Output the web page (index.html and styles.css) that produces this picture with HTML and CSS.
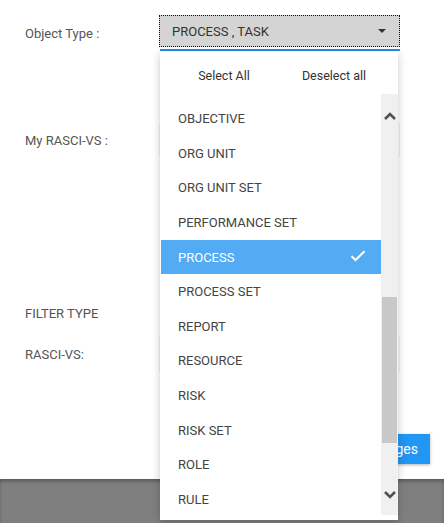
FILE: index.html
```html
<!DOCTYPE html>
<html>
<head>
<meta charset="utf-8">
<link rel="stylesheet" href="styles.css">
</head>
<body>
<div class="page">
  <div class="form">
    <div class="row row-type">
      <div class="label">Object Type :</div>
      <div class="select-wrap">
        <div class="select">
          <span class="select-text">PROCESS , TASK</span>
          <span class="caret"></span>
        </div>
        <div class="underline"></div>
      </div>
    </div>
    <div class="row row-my">
      <div class="label">My RASCI-VS :</div>
      <div class="field"></div>
    </div>
    <div class="row row-filter">
      <div class="label">FILTER TYPE</div>
    </div>
    <div class="row row-rasci">
      <div class="label">RASCI-VS:</div>
      <div class="field"></div>
    </div>
    <div class="actions">
      <button class="btn">Save Changes</button>
    </div>
  </div>

  <div class="panel">
    <div class="panel-head">
      <span class="head-btn">Select All</span>
      <span class="head-btn">Deselect all</span>
    </div>
    <div class="panel-body">
      <ul class="list">
        <li class="item">OBJECTIVE</li>
        <li class="item">ORG UNIT</li>
        <li class="item">ORG UNIT SET</li>
        <li class="item">PERFORMANCE SET</li>
        <li class="item selected">PROCESS
          <svg class="check" width="16" height="12" viewBox="0 0 16 12"><path d="M1.5 6.2 L5.6 10 L14.5 1.2" fill="none" stroke="#fff" stroke-width="2"/></svg>
        </li>
        <li class="item">PROCESS SET</li>
        <li class="item">REPORT</li>
        <li class="item">RESOURCE</li>
        <li class="item">RISK</li>
        <li class="item">RISK SET</li>
        <li class="item">ROLE</li>
        <li class="item">RULE</li>
      </ul>
      <div class="sb">
        <div class="sb-btn">
          <svg width="12" height="8" viewBox="0 0 12 8"><path d="M1 7 L6 2 L11 7" fill="none" stroke="#505050" stroke-width="2.6"/></svg>
        </div>
        <div class="sb-thumb"></div>
        <div class="sb-space"></div>
        <div class="sb-btn">
          <svg width="12" height="8" viewBox="0 0 12 8"><path d="M1 1 L6 6 L11 1" fill="none" stroke="#505050" stroke-width="2.6"/></svg>
        </div>
      </div>
    </div>
  </div>
</div>
<div class="footer"></div>
</body>
</html>
```

FILE: styles.css
```css
* { box-sizing: border-box; }
html, body { margin: 0; padding: 0; }
body {
  width: 444px;
  height: 523px;
  overflow: hidden;
  font-family: Roboto, "Liberation Sans", sans-serif;
  background: #7f7f7f;
}
.page {
  position: relative;
  height: 479px;
  background: #fff;
}
.form {
  padding: 15px 0 0 25px;
}
.row {
  display: flex;
  align-items: center;
}
.label {
  width: 134px;
  font-size: 13px;
  color: #555;
}
.row-type { align-items: flex-start; }
.row-type .label { line-height: 32px; padding-top: 3px; }
.select-wrap {
  width: 241px;
}
.select {
  height: 32px;
  background: #d4d4d4;
  border: 1px dotted #111;
  display: flex;
  align-items: center;
  justify-content: space-between;
  padding: 0 13px 0 12px;
}
.select-text {
  font-size: 13px;
  color: #333;
}
.caret {
  width: 0;
  height: 0;
  border-left: 4px solid transparent;
  border-right: 4px solid transparent;
  border-top: 4px solid #333;
}
.underline {
  margin: 2px 0 0 1px;
  height: 2px;
  background: #2a8be0;
}
.field {
  width: 241px;
  height: 34px;
  border: 1px solid #f0f0f0;
}
.row-my { margin-top: 72px; height: 34px; }
.row-filter { margin-top: 146px; height: 20px; }
.row-rasci { margin-top: 14px; height: 35px; }
.row-rasci .field { height: 35px; }
.actions {
  margin-top: 62px;
  display: flex;
  justify-content: flex-end;
  padding-right: 14px;
}
.btn {
  height: 30px;
  border: none;
  background: #2196f3;
  color: #fff;
  font-family: Roboto, "Liberation Sans", sans-serif;
  font-size: 14px;
  padding: 0 12px;
  box-shadow: 0 1px 3px rgba(0,0,0,.3);
}
.footer {
  height: 44px;
  background: #7f7f7f;
  box-shadow: inset 0 3px 4px -1px rgba(0,0,0,.35);
}
.panel {
  position: absolute;
  left: 160px;
  top: 52px;
  width: 238px;
  height: 468px;
  background: #fff;
  box-shadow: 0 2px 8px rgba(0,0,0,.22);
  z-index: 5;
  display: flex;
  flex-direction: column;
}
.panel-head {
  height: 42px;
  display: grid;
  grid-template-columns: 110px 110px;
  padding: 5px 9px 0;
  align-items: center;
  justify-items: center;
}
.head-btn {
  font-size: 12.5px;
  color: #333;
}
.panel-body {
  flex: 1;
  display: flex;
  overflow: hidden;
  padding-bottom: 5px;
}
.list {
  list-style: none;
  margin: 0;
  padding: 7.5px 0 0 1px;
  flex: 1;
  overflow: hidden;
}
.item {
  height: 34.6px;
  display: flex;
  align-items: center;
  justify-content: space-between;
  padding: 0 15px 0 17px;
  font-size: 13px;
  color: #444;
}
.item.selected {
  background: #52abf3;
  color: #fff;
}
.check { margin-top: -3px; }
.sb {
  width: 17px;
  background: #f0f0f0;
  display: flex;
  flex-direction: column;
  align-items: center;
}
.sb-btn {
  height: 42px;
  width: 100%;
  display: flex;
  align-items: center;
  justify-content: center;
  padding-top: 1px;
}
.sb-thumb {
  margin-top: 161px;
  width: 15px;
  height: 146px;
  background: #c8c8c8;
}
.sb-space { flex: 1; }
```
